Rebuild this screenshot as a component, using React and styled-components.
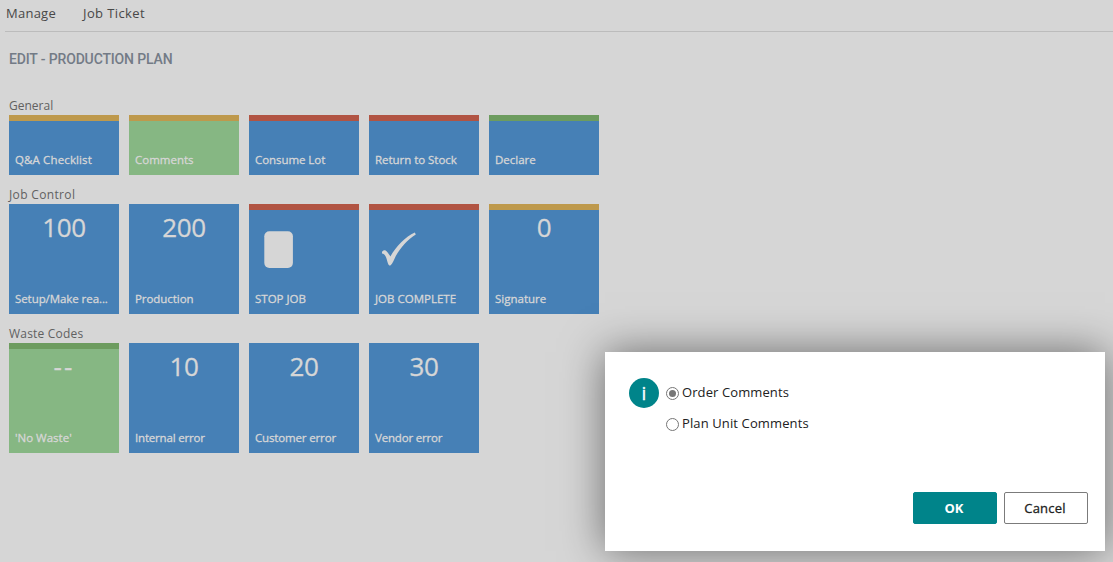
import React from "react";
import styled, { createGlobalStyle } from "styled-components";

const Global = createGlobalStyle`
  * { box-sizing: border-box; }
  body {
    margin: 0;
    background: #d6d6d6;
    font-family: "Open Sans", "Noto Sans", sans-serif;
    overflow: hidden;
  }
`;

const Page = styled.div`
  position: relative;
  height: 562px;
  overflow: hidden;
`;

const MenuBar = styled.nav`
  display: flex;
  gap: 27px;
  height: 32px;
  margin-left: 5px;
  padding-left: 1px;
  border-bottom: 1px solid #bcbcbc;
`;

const MenuItem = styled.a`
  font-size: 13px;
  line-height: 27px;
  color: #484848;
  white-space: nowrap;
  letter-spacing: ${(p) => p.$track || 0}px;
`;

const Content = styled.main`
  padding-left: 9px;
`;

const Title = styled.h1`
  margin: 19px 0 0;
  height: 17px;
  font: 500 14px/17px Roboto, sans-serif;
  letter-spacing: -0.15px;
  color: #737b86;
  white-space: nowrap;
`;

const Groups = styled.div`
  display: flex;
  flex-direction: column;
  gap: 12px;
  margin-top: 30px;
`;

const GroupTitle = styled.h2`
  margin: 0;
  height: 17px;
  font-size: 12px;
  font-weight: 400;
  line-height: 15px;
  color: #616161;
  white-space: nowrap;
  letter-spacing: ${(p) => p.$track || 0}px;
`;

const TileRow = styled.div`
  display: flex;
  gap: 10px;
`;

const Tile = styled.div`
  display: flex;
  flex-direction: column;
  justify-content: space-between;
  width: 110px;
  height: ${(p) => (p.$tall ? 110 : 60)}px;
  padding: ${(p) => (p.$bar ? 0 : 6)}px 6px 7px;
  border-top: ${(p) => (p.$bar ? `6px solid ${p.$bar}` : "0")};
  background: ${(p) => (p.$green ? "#86b783" : "#4680b6")};
  color: #d6d6d6;
`;

const TileValue = styled.div`
  height: 36px;
  font-size: 26px;
  line-height: 34px;
  text-align: center;
  letter-spacing: ${(p) => p.$track || -0.3}px;
  -webkit-text-stroke: 0.3px currentColor;
`;

const TileLabel = styled.div`
  margin-top: auto;
  font-size: 11.5px;
  line-height: 16px;
  white-space: nowrap;
  letter-spacing: ${(p) => p.$track || 0}px;
  -webkit-text-stroke: 0.3px currentColor;
`;

const TileIcon = styled.svg`
  display: block;
  width: 50px;
  height: 50px;
  margin-top: 12px;
  fill: #d6d6d6;
`;

const Dialog = styled.section`
  position: absolute;
  left: 605px;
  top: 352px;
  display: flex;
  flex-direction: column;
  justify-content: space-between;
  width: 500px;
  height: 199px;
  padding: 26px 17px 27px 24px;
  background: #fff;
  box-shadow: 0 0 40px rgba(0, 0, 0, 0.5);
`;

const Question = styled.div`
  display: flex;
  gap: 7px;
`;

const InfoBadge = styled.div`
  width: 30px;
  height: 30px;
  border-radius: 50%;
  background: #00848a;
  color: #fff;
  font-size: 19px;
  line-height: 30px;
  text-align: center;
  -webkit-text-stroke: 0.3px currentColor;
`;

const Options = styled.div`
  display: flex;
  flex-direction: column;
`;

const Option = styled.label`
  display: flex;
  align-items: flex-start;
  gap: 3px;
  height: 31px;
  font-size: 13px;
  line-height: 28px;
  color: #212121;
  white-space: nowrap;
  letter-spacing: ${(p) => p.$track || 0}px;
`;

const Radio = styled.span`
  display: flex;
  align-items: center;
  justify-content: center;
  width: 13px;
  height: 13px;
  margin-top: 9px;
  border: 1px solid #767676;
  border-radius: 50%;
  &::after {
    content: "";
    flex: none;
    width: 7px;
    height: 7px;
    border-radius: 50%;
    background: ${(p) => (p.$checked ? "#767676" : "transparent")};
  }
`;

const Actions = styled.div`
  display: flex;
  justify-content: flex-end;
  gap: 7px;
`;

const Button = styled.button`
  width: 84px;
  height: 32px;
  padding: 0 2px 0 0;
  border: 1px solid ${(p) => (p.$primary ? "#00848a" : "#7b7b7b")};
  border-radius: 2px;
  background: ${(p) => (p.$primary ? "#00848a" : "#fff")};
  color: ${(p) => (p.$primary ? "#fff" : "#212121")};
  font: ${(p) => (p.$primary ? 700 : 400)} 13px/28px "Open Sans", sans-serif;
  letter-spacing: ${(p) => p.$track || 0}px;
  -webkit-text-stroke: ${(p) => (p.$primary ? 0 : 0.3)}px currentColor;
`;

const AMBER = "#be994c";
const RED = "#b15443";
const GREEN = "#6d9c5f";

const icons = {
  stop: <rect x="9.3" y="9.3" width="28.6" height="36.6" rx="5" />,
  check: (
    <path d="M7 29.8C8.2 28 10.2 27.5 11.8 29.4C13.5 31.3 14.4 32.7 15.4 34.4C20.6 25.3 30.5 14.6 39.8 10.6L40.8 12.4C32.5 17.2 24.4 27.1 20.2 35.2C18.8 37.9 17.8 41.5 15 43.8C12.6 42.9 12.6 39.5 11.4 36.3C10.3 33.3 9.2 31.5 7 31.4Z" />
  ),
};

const groups = [
  {
    title: "General",
    tiles: [
      { label: "Q&A Checklist", bar: AMBER, track: 0.13 },
      { label: "Comments", bar: AMBER, green: true },
      { label: "Consume Lot", bar: RED, track: -0.06 },
      { label: "Return to Stock", bar: RED, track: -0.04 },
      { label: "Declare", bar: GREEN },
    ],
  },
  {
    title: "Job Control",
    track: 0.35,
    tall: true,
    tiles: [
      { label: "Setup/Make rea...", value: "100", track: -0.07 },
      { label: "Production", value: "200", track: -0.06 },
      { label: "STOP JOB", bar: RED, icon: "stop" },
      { label: "JOB COMPLETE", bar: RED, icon: "check" },
      { label: "Signature", bar: AMBER, value: "0" },
    ],
  },
  {
    title: "Waste Codes",
    track: 0.2,
    tall: true,
    tiles: [
      { label: "'No Waste'", bar: GREEN, green: true, value: "--", valueTrack: 2.2 },
      { label: "Internal error", value: "10", track: -0.19 },
      { label: "Customer error", value: "20", track: -0.15 },
      { label: "Vendor error", value: "30", track: -0.18 },
    ],
  },
];

export default function App() {
  return (
    <Page>
      <Global />
      <MenuBar>
        <MenuItem $track={0.25}>Manage</MenuItem>
        <MenuItem $track={0.4}>Job Ticket</MenuItem>
      </MenuBar>
      <Content>
        <Title>EDIT - PRODUCTION PLAN</Title>
        <Groups>
          {groups.map((g) => (
            <section key={g.title}>
              <GroupTitle $track={g.track}>{g.title}</GroupTitle>
              <TileRow>
                {g.tiles.map((t) => (
                  <Tile key={t.label} $tall={g.tall} $bar={t.bar} $green={t.green}>
                    {t.value && <TileValue $track={t.valueTrack}>{t.value}</TileValue>}
                    {t.icon && <TileIcon viewBox="0 0 50 50">{icons[t.icon]}</TileIcon>}
                    <TileLabel $track={t.track}>{t.label}</TileLabel>
                  </Tile>
                ))}
              </TileRow>
            </section>
          ))}
        </Groups>
      </Content>
      <Dialog>
        <Question>
          <InfoBadge>i</InfoBadge>
          <Options>
            <Option $track={0.1}><Radio $checked />Order Comments</Option>
            <Option $track={0.12}><Radio />Plan Unit Comments</Option>
          </Options>
        </Question>
        <Actions>
          <Button $primary>OK</Button>
          <Button $track={0.2}>Cancel</Button>
        </Actions>
      </Dialog>
    </Page>
  );
}
